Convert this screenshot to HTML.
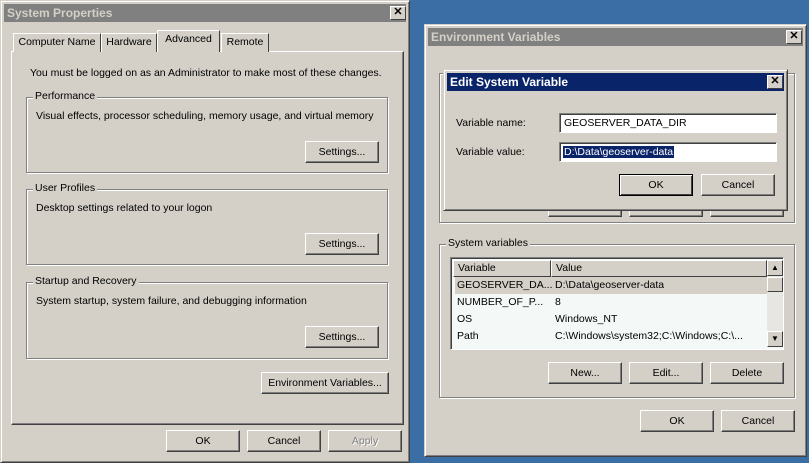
<!DOCTYPE html>
<html><head><style>
*{box-sizing:border-box;margin:0;padding:0}
body{width:809px;height:463px;background:#3a6ea5;position:relative;overflow:hidden;font-family:"Liberation Sans",sans-serif;font-size:10.5px;color:#000}
.a{position:absolute;white-space:nowrap}
.win{background:#d4d0c8;border:1px solid;border-color:#d4d0c8 #404040 #404040 #d4d0c8;box-shadow:inset 1px 1px #fff,inset -1px -1px #808080}
.tb{position:absolute;height:18px;color:#d4d0c8;font-weight:bold;font-size:12px;line-height:18px;padding-left:3px;background:#808080}
.x{position:absolute;width:16px;height:14px;background:#d4d0c8;border:1px solid;border-color:#fff #404040 #404040 #fff;font-size:11px;line-height:11px;text-align:center;font-weight:bold;color:#000}
.btn{position:absolute;background:#d4d0c8;border:1px solid;border-color:#fff #404040 #404040 #fff;box-shadow:inset -1px -1px #808080;text-align:center;line-height:20px;height:22px;width:74px}
.grp{position:absolute;border:1px solid #808080;box-shadow:1px 1px #fff,inset 1px 1px #fff}
.lg{position:absolute;top:-8px;left:6px;background:#d4d0c8;padding:0 2px}
.inp{position:absolute;background:#fff;border:1px solid;border-color:#808080 #fff #fff #808080;box-shadow:inset 1px 1px #404040;height:20px;line-height:18px;padding-left:4px}
.tab{position:absolute;height:19px;border:1px solid;border-color:#fff #404040 transparent #fff;border-bottom:none;line-height:17px;text-align:center;background:#d4d0c8}
</style></head><body>
<div class="a win" style="left:0;top:0;width:410px;height:463px">
 <div class="tb" style="left:3px;top:3px;width:402px">System Properties</div>
 <div class="x" style="left:389px;top:5px">✕</div>
 <div class="a" style="left:10px;top:50px;width:393px;height:374px;border:1px solid;border-color:#fff #404040 #404040 #fff;box-shadow:inset -1px -1px #808080"></div>
 <div class="tab" style="left:12px;top:32px;width:88px">Computer Name</div>
 <div class="tab" style="left:100px;top:32px;width:56px">Hardware</div>
 <div class="tab" style="left:156px;top:29px;width:63px;height:22px;z-index:2">Advanced</div>
 <div class="tab" style="left:220px;top:32px;width:48px">Remote</div>
 <div class="a" style="left:29px;top:66px">You must be logged on as an Administrator to make most of these changes.</div>
 <div class="grp" style="left:25px;top:96px;width:362px;height:76px"><div class="lg">Performance</div><div class="a" style="left:9px;top:12px">Visual effects, processor scheduling, memory usage, and virtual memory</div></div>
 <div class="btn" style="left:304px;top:140px">Settings...</div>
 <div class="grp" style="left:25px;top:188px;width:362px;height:76px"><div class="lg">User Profiles</div><div class="a" style="left:9px;top:12px">Desktop settings related to your logon</div></div>
 <div class="btn" style="left:304px;top:232px">Settings...</div>
 <div class="grp" style="left:25px;top:281px;width:362px;height:77px"><div class="lg">Startup and Recovery</div><div class="a" style="left:9px;top:12px">System startup, system failure, and debugging information</div></div>
 <div class="btn" style="left:304px;top:325px">Settings...</div>
 <div class="btn" style="left:260px;top:371px;width:128px">Environment Variables...</div>
 <div class="btn" style="left:165px;top:429px">OK</div>
 <div class="btn" style="left:246px;top:429px">Cancel</div>
 <div class="btn" style="left:327px;top:429px;color:#808080;text-shadow:1px 1px #fff">Apply</div>
</div>
<div class="a win" style="left:424px;top:24px;width:383px;height:433px">
 <div class="tb" style="left:3px;top:3px;width:375px">Environment Variables</div>
 <div class="x" style="left:361px;top:5px">✕</div>
 <div class="grp" style="left:14px;top:48px;width:356px;height:150px"></div>
 <div class="btn" style="left:123px;top:170px">New...</div>
 <div class="btn" style="left:204px;top:170px">Edit...</div>
 <div class="btn" style="left:285px;top:170px">Delete</div>
 <div class="grp" style="left:14px;top:219px;width:356px;height:154px"><div class="lg">System variables</div></div>
 <div class="a" style="left:25px;top:232px;width:334px;height:93px;background:#f4f8f6;border:1px solid;border-color:#808080 #fff #fff #808080;box-shadow:inset 1px 1px #404040">
  <div class="a" style="left:2px;top:2px;width:98px;height:17px;border:1px solid;border-color:#fff #404040 #404040 #fff;background:#d4d0c8;padding-left:4px;line-height:15px">Variable</div>
  <div class="a" style="left:100px;top:2px;width:216px;height:17px;border:1px solid;border-color:#fff #404040 #404040 #fff;background:#d4d0c8;padding-left:4px;line-height:15px">Value</div>
  <div class="a" style="left:4px;top:19px;width:312px;height:17px;background:#d4d0c8"></div>
  <div class="a" style="left:6px;top:21px">GEOSERVER_DA...</div><div class="a" style="left:104px;top:21px">D:\Data\geoserver-data</div>
  <div class="a" style="left:6px;top:38px">NUMBER_OF_P...</div><div class="a" style="left:104px;top:38px">8</div>
  <div class="a" style="left:6px;top:55px">OS</div><div class="a" style="left:104px;top:55px">Windows_NT</div>
  <div class="a" style="left:6px;top:72px">Path</div><div class="a" style="left:104px;top:72px">C:\Windows\system32;C:\Windows;C:\...</div>
  <div class="a" style="left:316px;top:2px;width:16px;height:87px;background:#e8e6e2"></div>
  <div class="x" style="left:316px;top:2px;width:16px;height:16px;font-size:8px;line-height:14px">▲</div>
  <div class="x" style="left:316px;top:19px;width:16px;height:15px"></div>
  <div class="x" style="left:316px;top:73px;width:16px;height:16px;font-size:8px;line-height:14px">▼</div>
 </div>
 <div class="btn" style="left:123px;top:337px">New...</div>
 <div class="btn" style="left:204px;top:337px">Edit...</div>
 <div class="btn" style="left:285px;top:337px">Delete</div>
 <div class="btn" style="left:215px;top:385px">OK</div>
 <div class="btn" style="left:296px;top:385px">Cancel</div>
</div>
<div class="a win" style="left:443px;top:69px;width:345px;height:142px">
 <div class="tb" style="left:3px;top:3px;width:337px;background:#0a246a;color:#fff">Edit System Variable</div>
 <div class="x" style="left:323px;top:5px">✕</div>
 <div class="a" style="left:12px;top:47px">Variable name:</div>
 <div class="inp" style="left:115px;top:43px;width:218px">GEOSERVER_DATA_DIR</div>
 <div class="a" style="left:12px;top:76px">Variable value:</div>
 <div class="inp" style="left:115px;top:72px;width:218px;padding-left:3px"><span style="background:#0a246a;color:#fff;padding:0 1px">D:\Data\geoserver-data</span></div>
 <div class="btn" style="left:175px;top:104px;border:1px solid #000;box-shadow:inset 1px 1px #fff,inset -1px -1px #404040">OK</div>
 <div class="btn" style="left:257px;top:104px">Cancel</div>
</div>
</body></html>
